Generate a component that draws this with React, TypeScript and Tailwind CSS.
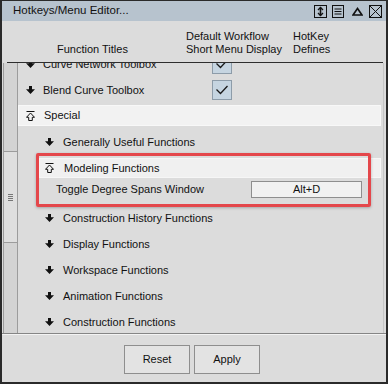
import React from "react";

const DownArrow = () => (
  <svg width="9" height="8" viewBox="0 0 9 8" className="shrink-0">
    <path d="M3 0h3v3.2h3L4.5 8 0 3.2h3z" fill="#111" />
  </svg>
);

const UpOutline = () => (
  <svg width="9" height="10" viewBox="0 0 9 10" fill="none" stroke="#111" strokeWidth="1" className="shrink-0">
    <path d="M0.5 0.5h8" />
    <path d="M4.5 2 8.5 6.3H6.3v3.2H2.7V6.3H0.5z" />
  </svg>
);

const Check = () => (
  <div className="w-[20px] h-[20px] bg-[#c6d5e1] border border-[#8d9ca9] flex items-center justify-center">
    <svg width="14" height="12" viewBox="0 0 14 12" fill="none" stroke="#1a1a1a" strokeWidth="1.3">
      <path d="M1.5 5.5 5.5 9.5 12.5 2" />
    </svg>
  </div>
);

type Item = { label: string; level: 1 | 2; check?: boolean };

const Row = ({ label, level, check }: Item) => (
  <div className="h-[26px] flex items-center">
    <div className={level === 1 ? "w-[8px] shrink-0" : "w-[27px] shrink-0"} />
    <DownArrow />
    <div className={level === 1 ? "w-[8px] shrink-0" : "w-[9px] shrink-0"} />
    <span className="w-[169px] shrink-0 whitespace-nowrap">{label}</span>
    {check && <Check />}
  </div>
);

const TitleIcons = () => (
  <div className="flex items-center gap-[5px] pr-[4px]">
    <svg width="13" height="13" viewBox="0 0 13 13" fill="none" stroke="#111">
      <rect x="0.5" y="0.5" width="12" height="12" />
      <path d="M6.5 2.5v8" strokeWidth="1.6" />
      <path d="M4 5 6.5 2.5 9 5M4 8l2.5 2.5L9 8" strokeWidth="1.3" />
    </svg>
    <svg width="12" height="13" viewBox="0 0 12 13" fill="none" stroke="#111">
      <rect x="0.5" y="0.5" width="11" height="12" />
      <path d="M2.5 4h7M2.5 6.5h7M2.5 9h7" />
    </svg>
    <svg width="11" height="9" viewBox="0 0 11 9" fill="none" stroke="#111" strokeWidth="1.6" className="ml-[3px]">
      <path d="M1 8h9L5.5 1.5z" />
    </svg>
    <svg width="13" height="13" viewBox="0 0 13 13" fill="none" stroke="#111" className="ml-[1px]">
      <rect x="0.5" y="0.5" width="12" height="12" />
      <path d="M1 1l11 11M12 1 1 12" />
    </svg>
  </div>
);

export default function App() {
  const lower: Item[] = [
    { label: "Construction History Functions", level: 2 },
    { label: "Display Functions", level: 2 },
    { label: "Workspace Functions", level: 2 },
    { label: "Animation Functions", level: 2 },
    { label: "Construction Functions", level: 2 },
  ];

  return (
    <div className="relative w-[389px] h-[386px] bg-white font-['Liberation_Sans',Arial,sans-serif] text-[11px] text-[#111]">
      <div className="w-[388px] h-[384px] border-x-2 border-t border-b-2 border-[#2a2a2a] bg-[#dcdcdc] flex flex-col">
        {/* title bar */}
        <div className="h-[20px] bg-[#b7c3ce] flex items-center justify-between pl-[11px]">
          <span className="text-[11.5px]">Hotkeys/Menu Editor...</span>
          <TitleIcons />
        </div>

        {/* column headers */}
        <div className="h-[41px] flex pt-[9px] leading-[13px]">
          <div className="w-[184px] pl-[55px] flex flex-col">
            <span>&nbsp;</span>
            <span>Function Titles</span>
          </div>
          <div className="w-[107px] flex flex-col">
            <span>Default Workflow</span>
            <span>Short Menu Display</span>
          </div>
          <div className="flex flex-col">
            <span>HotKey</span>
            <span>Defines</span>
          </div>
        </div>
        <div className="h-px ml-[5px] w-[376px] bg-[#2e2e2e]" />

        {/* list body */}
        <div className="h-[270px] flex">
          <div className="ml-[1px] w-[15px] h-full border-x border-[#9c9c9c] bg-[#d3d3d3] flex flex-col">
            <div className="mt-[88px] h-[92px] bg-[#dfdfdf] border-y border-[#9c9c9c] flex items-center justify-center">
              <div className="flex flex-col gap-[1px]">
                <div className="w-[5px] h-px bg-[#777]" />
                <div className="w-[5px] h-px bg-[#777]" />
                <div className="w-[5px] h-px bg-[#777]" />
                <div className="w-[5px] h-px bg-[#777]" />
              </div>
            </div>
          </div>

          <div className="w-[366px] h-full overflow-hidden border-r border-[#c6c6c6]">
            <div className="-mt-[12px]">
              <Row label="Curve Network Toolbox" level={1} check />
              <Row label="Blend Curve Toolbox" level={1} check />

              <div className="h-[26px] pt-[2px]">
                <div className="h-[21px] w-[363px] bg-[#f2f2f2] border border-[#f8f8f8] flex items-center pl-[7px] gap-[9px]">
                  <UpOutline />
                  <span>Special</span>
                </div>
              </div>

              <Row label="Generally Useful Functions" level={2} />

              <div className="h-[25px] pt-[3px] pl-[21px]">
                <div className="h-[20px] w-[342px] bg-[#f0f0f0] border border-[#f6f6f6] flex items-center pl-[5px] gap-[10px]">
                  <UpOutline />
                  <span>Modeling Functions</span>
                </div>
              </div>

              <div className="h-[25px] pt-[1px] flex items-start">
                <div className="h-[17px] flex items-center">
                  <span className="pl-[38px] w-[233px]">Toggle Degree Spans Window</span>
                  <div className="w-[111px] h-[17px] bg-[#f1f1f1] border border-[#8e8e8e] flex items-center justify-center">
                    Alt+D
                  </div>
                </div>
              </div>

              {lower.map((it) => (
                <Row key={it.label} {...it} />
              ))}
            </div>
          </div>
        </div>

        {/* footer */}
        <div className="h-px bg-[#858585]" />
        <div className="h-px bg-[#f3f3f3]" />
        <div className="flex-1 flex justify-center pt-[10px] pr-[4px] gap-[4px]">
          <button className="w-[66px] h-[29px] bg-[#e3e3e3] border border-[#8e8e8e] text-[11px]">Reset</button>
          <button className="w-[66px] h-[29px] bg-[#e3e3e3] border border-[#8e8e8e] text-[11px]">Apply</button>
        </div>
      </div>

      {/* annotation highlight */}
      <div className="absolute left-[36px] top-[153px] w-[335px] h-[54px] border-[3px] border-[#e4474b] rounded-[2px] shadow-[0_1px_3px_rgba(0,0,0,0.25)] pointer-events-none" />
    </div>
  );
}
